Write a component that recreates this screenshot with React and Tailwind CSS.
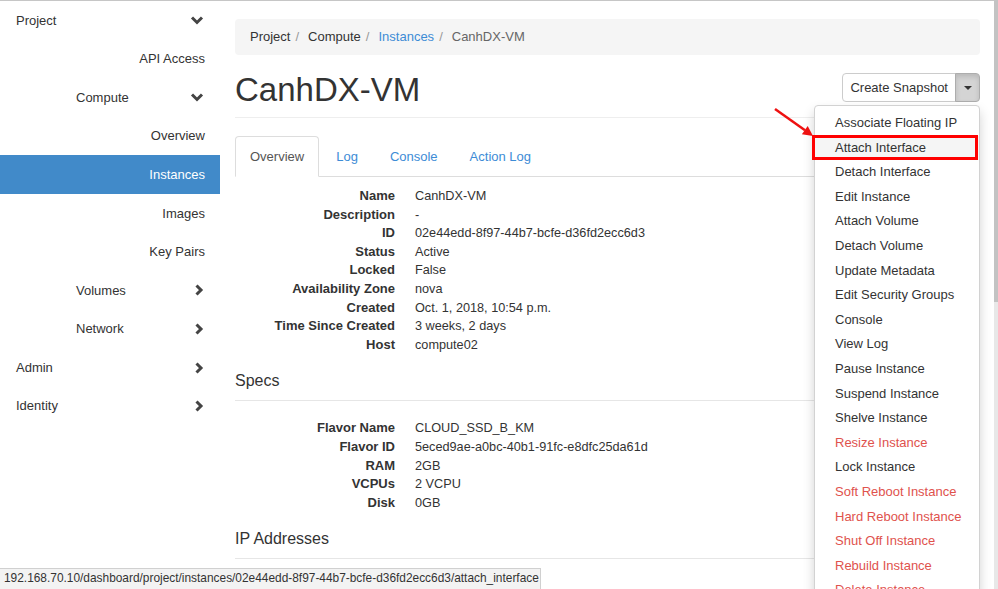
import React from "react";

const SIDEBAR = [
  { label: "Project", level: 0, icon: "down" },
  { label: "API Access", level: 2 },
  { label: "Compute", level: 1, icon: "down" },
  { label: "Overview", level: 2 },
  { label: "Instances", level: 2, active: true },
  { label: "Images", level: 2 },
  { label: "Key Pairs", level: 2 },
  { label: "Volumes", level: 1, icon: "right" },
  { label: "Network", level: 1, icon: "right" },
  { label: "Admin", level: 0, icon: "right" },
  { label: "Identity", level: 0, icon: "right" },
];

const OVERVIEW = [
  ["Name", "CanhDX-VM"],
  ["Description", "-"],
  ["ID", "02e44edd-8f97-44b7-bcfe-d36fd2ecc6d3"],
  ["Status", "Active"],
  ["Locked", "False"],
  ["Availability Zone", "nova"],
  ["Created", "Oct. 1, 2018, 10:54 p.m."],
  ["Time Since Created", "3 weeks, 2 days"],
  ["Host", "compute02"],
];

const SPECS = [
  ["Flavor Name", "CLOUD_SSD_B_KM"],
  ["Flavor ID", "5eced9ae-a0bc-40b1-91fc-e8dfc25da61d"],
  ["RAM", "2GB"],
  ["VCPUs", "2 VCPU"],
  ["Disk", "0GB"],
];

const ACTIONS = [
  { label: "Associate Floating IP" },
  { label: "Attach Interface", hover: true },
  { label: "Detach Interface" },
  { label: "Edit Instance" },
  { label: "Attach Volume" },
  { label: "Detach Volume" },
  { label: "Update Metadata" },
  { label: "Edit Security Groups" },
  { label: "Console" },
  { label: "View Log" },
  { label: "Pause Instance" },
  { label: "Suspend Instance" },
  { label: "Shelve Instance" },
  { label: "Resize Instance", danger: true },
  { label: "Lock Instance" },
  { label: "Soft Reboot Instance", danger: true },
  { label: "Hard Reboot Instance", danger: true },
  { label: "Shut Off Instance", danger: true },
  { label: "Rebuild Instance", danger: true },
  { label: "Delete Instance", danger: true },
];

function Chevron({ dir }) {
  if (dir === "down") {
    return (
      <svg width="14" height="10" viewBox="0 0 14 10" className="block">
        <polyline points="2,2.5 7,7.5 12,2.5" fill="none" stroke="#444" strokeWidth="3" />
      </svg>
    );
  }
  return (
    <svg width="10" height="12" viewBox="0 0 10 12" className="block">
      <polyline points="2.5,1.5 7,6 2.5,10.5" fill="none" stroke="#444" strokeWidth="3" />
    </svg>
  );
}

function NavRow({ item }) {
  const base = "h-[38.6px] flex items-center text-[13px]";
  if (item.level === 2) {
    return (
      <div
        className={
          base +
          " justify-end pr-[15px] " +
          (item.active ? "bg-[#418ac9] text-white" : "text-[#333]")
        }
      >
        {item.label}
      </div>
    );
  }
  return (
    <div className={base + " justify-between pr-[16px] text-[#333] " + (item.level === 0 ? "pl-[16px]" : "pl-[76px]")}>
      <span>{item.label}</span>
      <Chevron dir={item.icon} />
    </div>
  );
}

function DetailList({ rows }) {
  return (
    <dl className="leading-[18.6px]">
      {rows.map(([k, v]) => (
        <div key={k} className="flex">
          <dt className="w-[160px] text-right font-bold text-[#333] shrink-0">{k}</dt>
          <dd className="ml-[20px] text-[#333] text-[12.7px]">{v}</dd>
        </div>
      ))}
    </dl>
  );
}

function SectionTitle({ children }) {
  return (
    <h4 className="text-[16px] leading-[18px] pb-[10px] border-b border-[#e6e6e6] text-[#333]">{children}</h4>
  );
}

function ActionsMenu() {
  return (
    <div className="absolute right-0 top-[32px] w-[166px] bg-white border border-[#d2d2d2] rounded-[4px] shadow-[0_6px_12px_rgba(0,0,0,0.175)] pt-[5px] z-10">
      {ACTIONS.map((a) => (
        <div
          key={a.label}
          className={
            "px-[20px] py-[3px] leading-[18.6px] whitespace-nowrap " +
            (a.hover ? "bg-[#f5f5f5] " : "") +
            (a.danger ? "text-[#e0524d]" : "text-[#333]")
          }
        >
          {a.label}
        </div>
      ))}
    </div>
  );
}

export default function App() {
  return (
    <div className="relative w-[998px] h-[589px] overflow-hidden flex bg-white text-[13px] text-[#333] font-['Liberation_Sans',Arial,sans-serif]">
      <div className="flex-1 flex border-t border-[#c6c6c6]">
        <nav className="w-[220px] shrink-0">
          {SIDEBAR.map((item) => (
            <NavRow key={item.label} item={item} />
          ))}
        </nav>

        <main className="flex-1 pl-[15px] pr-[14px]">
          <ol className="mt-[18px] h-[36px] px-[15px] flex items-center bg-[#f5f5f5] rounded-[4px]">
            <li className="text-[#333]">Project</li>
            <li className="text-[#333]">
              <span className="text-[#999] ml-[5px] mr-[9px]">/</span>Compute
            </li>
            <li className="text-[#3d8cd6]">
              <span className="text-[#999] ml-[5px] mr-[9px]">/</span>Instances
            </li>
            <li className="text-[#666]">
              <span className="text-[#999] ml-[5px] mr-[9px]">/</span>CanhDX-VM
            </li>
          </ol>

          <div className="mt-[17px] flex items-start justify-between pb-[9px] border-b border-[#eee]">
            <h1 className="text-[33px] leading-[36px] text-[#333]">CanhDX-VM</h1>
            <div className="relative mt-[1px] flex">
              <button className="h-[29px] px-[7px] border border-[#ccc] rounded-l-[4px] bg-white text-[#333] leading-[17px]">
                Create Snapshot
              </button>
              <button className="h-[29px] w-[25px] -ml-px border border-[#adadad] rounded-r-[4px] bg-[#d4d4d4] shadow-[inset_0_3px_5px_rgba(0,0,0,0.125)] flex items-center justify-center">
                <span className="w-0 h-0 border-l-[4px] border-r-[4px] border-t-[4px] border-l-transparent border-r-transparent border-t-[#333]" />
              </button>
              <ActionsMenu />
            </div>
          </div>

          <ul className="mt-[18px] flex border-b border-[#ddd]">
            {["Overview", "Log", "Console", "Action Log"].map((t, i) => (
              <li
                key={t}
                className={
                  "-mb-px mr-[2px] px-[14px] py-[10px] leading-[19px] border rounded-t-[4px] " +
                  (i === 0
                    ? "border-[#ddd] border-b-white bg-white text-[#555]"
                    : "border-transparent text-[#3d8cd6]")
                }
              >
                {t}
              </li>
            ))}
          </ul>

          <div className="mt-[10px]">
            <DetailList rows={OVERVIEW} />
          </div>

          <div className="mt-[18px]">
            <SectionTitle>Specs</SectionTitle>
          </div>
          <div className="mt-[18px]">
            <DetailList rows={SPECS} />
          </div>

          <div className="mt-[18px]">
            <SectionTitle>IP Addresses</SectionTitle>
          </div>
        </main>
      </div>

      <div className="w-[4px] flex flex-col">
        <div className="h-[302px] bg-[#c3c3c3]" />
        <div className="flex-1 bg-[#e8e8e8]" />
      </div>

      {/* screenshot annotation: red box + arrow */}
      <div className="absolute z-20 left-[812px] top-[135px] w-[166px] h-[25px] border-[3px] border-[#ff0000] pointer-events-none" />
      <svg className="absolute z-20 left-0 top-0 pointer-events-none" width="998" height="589">
        <line x1="775" y1="109" x2="805" y2="130.2" stroke="#ee1111" strokeWidth="2.5" />
        <polygon points="813,136 801.9,134.3 807.7,126.1" fill="#ee1111" />
      </svg>

      <div className="absolute z-20 left-0 bottom-0 h-[21px] w-[541px] bg-[#f3f3f3] border-t border-r border-[#d0d0d0] pl-[4px] flex items-center text-[11.9px] text-[#333] whitespace-nowrap overflow-hidden">
        192.168.70.10/dashboard/project/instances/02e44edd-8f97-44b7-bcfe-d36fd2ecc6d3/attach_interface
      </div>
    </div>
  );
}
